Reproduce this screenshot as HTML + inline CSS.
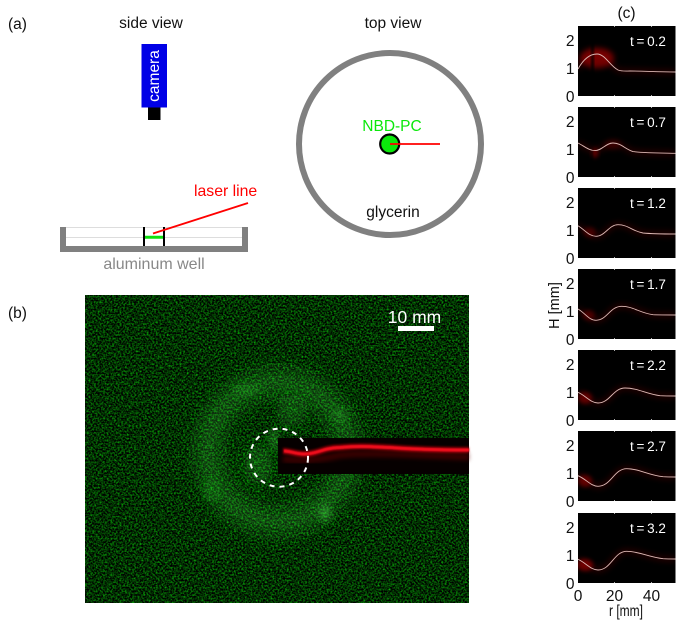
<!DOCTYPE html>
<html>
<head>
<meta charset="utf-8">
<style>
html,body{margin:0;padding:0;background:#fff;width:692px;height:629px;overflow:hidden}
svg{display:block}
text{font-family:"Liberation Sans",sans-serif;font-size:15.5px;fill:#111}
.t{fill:#fff;font-size:13.5px;word-spacing:-1px}
.c{text-anchor:middle}
.e{text-anchor:end}
.curve{fill:none;stroke:#dcb8b4;stroke-width:.9}
.glow{fill:none;stroke:#a00000;stroke-width:6;opacity:.2;filter:url(#b3)}
</style>
</head>
<body>
<svg width="692" height="629" viewBox="0 0 692 629" xmlns="http://www.w3.org/2000/svg">
<defs>
<filter id="noise" x="0" y="0" width="100%" height="100%" color-interpolation-filters="sRGB">
<feTurbulence type="fractalNoise" baseFrequency="0.55" numOctaves="2" seed="7"/>
<feColorMatrix type="matrix" values="0.06 0 0 0 -0.02  1.3 0 0 0 -0.46  0.06 0 0 0 -0.02  0 0 0 0 1"/>
</filter>
<filter id="spark" x="0" y="0" width="100%" height="100%" color-interpolation-filters="sRGB">
<feTurbulence type="fractalNoise" baseFrequency="0.8" numOctaves="1" seed="21"/>
<feColorMatrix type="matrix" values="0 0 0 0 .1  0 0 0 0 .8  0 0 0 0 .1  12 0 0 0 -10"/>
</filter>
<filter id="b2" x="-50%" y="-50%" width="200%" height="200%"><feGaussianBlur stdDeviation="2"/></filter>
<filter id="b3" x="-20%" y="-100%" width="140%" height="300%"><feGaussianBlur stdDeviation="3"/></filter>
<filter id="b7" x="-50%" y="-50%" width="200%" height="200%"><feGaussianBlur stdDeviation="9"/></filter>
<filter id="b4" x="-80%" y="-80%" width="260%" height="260%"><feGaussianBlur stdDeviation="4"/></filter>
<filter id="b1" x="-20%" y="-100%" width="140%" height="300%"><feGaussianBlur stdDeviation="1"/></filter>
<filter id="b05" x="-20%" y="-100%" width="140%" height="300%"><feGaussianBlur stdDeviation=".6"/></filter>
<clipPath id="pc"><rect width="97.5" height="70"/></clipPath>
<clipPath id="gc"><rect x="85" y="295" width="384" height="308"/></clipPath>
</defs>

<text x="8" y="29">(a)</text>
<text x="151" y="28" class="c">side view</text>
<rect x="141.500" y="44" width="25.500" height="63.500" fill="#0000e6"/>
<rect x="148" y="107.500" width="12.500" height="12.500" fill="#000"/>
<text transform="translate(159,76) rotate(-90)" class="c" style="fill:#fff">camera</text>

<path d="M66 227.500H242M66 237.500H242" stroke="#ddd" stroke-width="1"/>
<path d="M60 227V252H248V227H242V246H66V227Z" fill="#808080"/>
<path d="M144 227V246M164 227V246" stroke="#000" stroke-width="2"/>
<path d="M145 237.300H163" stroke="#10e010" stroke-width="3"/>
<path d="M153 233.500L248 203" stroke="#f00" stroke-width="1.900"/>
<text x="194" y="196" style="fill:#f00;font-size:15.800px">laser line</text>
<text x="154" y="269" class="c" style="fill:#888;font-size:16px">aluminum well</text>

<text x="393" y="28" class="c">top view</text>
<circle cx="390" cy="144" r="91" fill="none" stroke="#808080" stroke-width="6"/>
<text x="392" y="131" class="c" style="fill:#0be80b">NBD-PC</text>
<circle cx="389.700" cy="144" r="9.500" fill="#0be80b" stroke="#000" stroke-width="2.200"/>
<path d="M390 144H440" stroke="#f00" stroke-width="1.800"/>
<text x="393" y="217" class="c">glycerin</text>

<text x="8" y="318">(b)</text>
<g clip-path="url(#gc)">
<rect x="85" y="295" width="384" height="308" filter="url(#noise)"/>
<g style="mix-blend-mode:screen">
<circle cx="278" cy="452" r="70" fill="none" stroke="#124a12" stroke-width="26" filter="url(#b7)" opacity=".7"/>
<ellipse cx="325" cy="513" rx="5" ry="8" fill="#2a7a2a" filter="url(#b4)"/>
<ellipse cx="292" cy="410" rx="10" ry="16" fill="#124a12" filter="url(#b7)"/>
<ellipse cx="246" cy="390" rx="14" ry="5" fill="#124e12" filter="url(#b4)"/>
<ellipse cx="340" cy="415" rx="7" ry="7" fill="#124e12" filter="url(#b4)"/>
<ellipse cx="274" cy="440" rx="4" ry="11" fill="#1a601a" filter="url(#b4)"/>
<ellipse cx="258" cy="465" rx="14" ry="20" fill="#0f3c0f" filter="url(#b7)"/>
<ellipse cx="212" cy="490" rx="8" ry="12" fill="#0f420f" filter="url(#b4)"/>
</g>
<rect x="85" y="295" width="384" height="308" filter="url(#spark)"/>
</g>
<rect x="278" y="438" width="191" height="36" fill="#060000"/>
<path d="M283 459C300 461 320 460 340 455C370 452 420 455 469 457" fill="none" stroke="#600000" stroke-width="7" opacity=".55" filter="url(#b2)"/>
<path d="M283 451C290 451 296 454 304 454C318 454 322 448 340 447.500C360 445.500 375 447 390 447.500C410 449 440 450 469 450" fill="none" stroke="#d00008" stroke-width="6" opacity=".7" filter="url(#b1)"/>
<path d="M284 451C290 451 296 454 304 454C318 454 322 448 340 447.500C360 445.500 375 447 390 447.500C410 449 440 450 469 450" fill="none" stroke="#f0101c" stroke-width="3" filter="url(#b05)"/>
<circle cx="279" cy="457.700" r="29" fill="none" stroke="#fff" stroke-width="2" stroke-dasharray="5 5"/>
<rect x="398" y="326" width="36" height="5" fill="#fff"/>
<text x="414.500" y="323" class="c" style="fill:#fff;font-size:17.500px">10 mm</text>

<text x="626.500" y="18" class="c">(c)</text>

<!-- panels -->
<g transform="translate(578,26)">
<rect width="97.500" height="70" fill="#000"/>
<g clip-path="url(#pc)">
<ellipse cx="19" cy="32" rx="17" ry="10" fill="#b00000" filter="url(#b3)" opacity=".65"/>
<rect x="13" y="0" width="3" height="70" fill="#000" filter="url(#b1)" opacity=".85"/>
<path class="glow" d="M0 43C5 34 11 28 19 28C27 28 32 40 40 44C44 45.500 48 45 52 45C65 45 80 46 97.500 46"/>
<path class="curve" d="M0 43C5 34 11 28 19 28C27 28 32 40 40 44C44 45.500 48 45 52 45C65 45 80 46 97.500 46"/>
</g>
<text x="52" y="20" class="t">t = 0.2</text>
</g>
<g transform="translate(578,107)">
<rect width="97.500" height="70" fill="#000"/>
<g clip-path="url(#pc)">
<ellipse cx="17" cy="46" rx="3" ry="5" fill="#a00000" filter="url(#b2)" opacity=".6"/>
<ellipse cx="35" cy="38" rx="8" ry="4" fill="#700000" filter="url(#b3)" opacity=".45"/>
<rect x="13" y="0" width="2" height="70" fill="#000" filter="url(#b1)" opacity=".6"/>
<path class="glow" d="M0 36C6 39 11 43.600 17 43.600C24 43.600 28 36 35 36C43 36 47 42 55 44.600C65 46 80 46 97.500 46.300"/>
<path class="curve" d="M0 36C6 39 11 43.600 17 43.600C24 43.600 28 36 35 36C43 36 47 42 55 44.600C65 46 80 46 97.500 46.300"/>
</g>
<text x="52" y="20" class="t">t = 0.7</text>
</g>
<g transform="translate(578,188)">
<rect width="97.500" height="70" fill="#000"/>
<g clip-path="url(#pc)">
<ellipse cx="12" cy="44" rx="6" ry="5" fill="#800000" filter="url(#b2)" opacity=".45"/>
<path class="glow" d="M0 37.700C7 42 11 48.300 18 48.300C27 48.300 31 36.700 40 36.700C50 36.700 54 43 65 45C75 46 85 46 97.500 46"/>
<path class="curve" d="M0 37.700C7 42 11 48.300 18 48.300C27 48.300 31 36.700 40 36.700C50 36.700 54 43 65 45C75 46 85 46 97.500 46"/>
</g>
<text x="52" y="20" class="t">t = 1.2</text>
</g>
<g transform="translate(578,269)">
<rect width="97.500" height="70" fill="#000"/>
<g clip-path="url(#pc)">
<ellipse cx="11" cy="46" rx="6" ry="5" fill="#900000" filter="url(#b2)" opacity=".45"/>
<path class="glow" d="M0 40C7 44 11 51.300 18 51.300C29 51.300 32 37.300 43.700 37.300C55 37.300 62 44 75 45.700C82 46 90 46 97.500 46"/>
<path class="curve" d="M0 40C7 44 11 51.300 18 51.300C29 51.300 32 37.300 43.700 37.300C55 37.300 62 44 75 45.700C82 46 90 46 97.500 46"/>
</g>
<text x="52" y="20" class="t">t = 1.7</text>
</g>
<g transform="translate(578,350)">
<rect width="97.500" height="70" fill="#000"/>
<g clip-path="url(#pc)">
<ellipse cx="7" cy="48" rx="7" ry="6" fill="#b00000" filter="url(#b2)" opacity=".5"/>
<path class="glow" d="M0 42.300C8 46 13 53 20 53C32 53 35 38 47 38C60 38 68 44 82 45.700C87 46 92 46 97.500 46"/>
<path class="curve" d="M0 42.300C8 46 13 53 20 53C32 53 35 38 47 38C60 38 68 44 82 45.700C87 46 92 46 97.500 46"/>
</g>
<text x="52" y="20" class="t">t = 2.2</text>
</g>
<g transform="translate(578,431)">
<rect width="97.500" height="70" fill="#000"/>
<g clip-path="url(#pc)">
<ellipse cx="7" cy="50" rx="7" ry="6" fill="#b00000" filter="url(#b2)" opacity=".5"/>
<path class="glow" d="M0 44.700C8 48 13 55.300 20 55.300C33 55.300 36 37.700 48.700 37.700C61 37.700 70 44 85 45.700C89 46 93 46 97.500 46"/>
<path class="curve" d="M0 44.700C8 48 13 55.300 20 55.300C33 55.300 36 37.700 48.700 37.700C61 37.700 70 44 85 45.700C89 46 93 46 97.500 46"/>
</g>
<text x="52" y="20" class="t">t = 2.7</text>
</g>
<g transform="translate(578,513)">
<rect width="97.500" height="70" fill="#000"/>
<g clip-path="url(#pc)">
<ellipse cx="7" cy="52" rx="8" ry="6" fill="#c00000" filter="url(#b2)" opacity=".55"/>
<path class="glow" d="M0 46.300C8 50 13 57 20 57C33 57 36 38.300 48.700 38.300C61 38.300 70 44 85 45.700C89 46 93 46 97.500 46"/>
<path class="curve" d="M0 46.300C8 50 13 57 20 57C33 57 36 38.300 48.700 38.300C61 38.300 70 44 85 45.700C89 46 93 46 97.500 46"/>
</g>
<text x="52" y="20" class="t">t = 3.2</text>
</g>

<!-- ticks -->
<path d="M614.500 26v1M651.500 26v1M614.500 95v1M651.500 95v1M614.500 107v1M651.500 107v1M614.500 176v1M651.500 176v1M614.500 188v1M651.500 188v1M614.500 257v1M651.500 257v1M614.500 269v1M651.500 269v1M614.500 338v1M651.500 338v1M614.500 350v1M651.500 350v1M614.500 419v1M651.500 419v1M614.500 431v1M651.500 431v1M614.500 500v1M651.500 500v1M614.500 513v1M651.500 513v1M614.500 582v1M651.500 582v1" stroke="#aaa" stroke-width="1"/>

<!-- y labels -->
<g>
<text x="574.500" y="46" class="e">2</text><text x="574.500" y="74" class="e">1</text><text x="574.500" y="102" class="e">0</text>
<text x="574.500" y="127" class="e">2</text><text x="574.500" y="155" class="e">1</text><text x="574.500" y="183" class="e">0</text>
<text x="574.500" y="208" class="e">2</text><text x="574.500" y="236" class="e">1</text><text x="574.500" y="264" class="e">0</text>
<text x="574.500" y="289" class="e">2</text><text x="574.500" y="317" class="e">1</text><text x="574.500" y="345" class="e">0</text>
<text x="574.500" y="370" class="e">2</text><text x="574.500" y="398" class="e">1</text><text x="574.500" y="426" class="e">0</text>
<text x="574.500" y="451" class="e">2</text><text x="574.500" y="479" class="e">1</text><text x="574.500" y="507" class="e">0</text>
<text x="574.500" y="533" class="e">2</text><text x="574.500" y="561" class="e">1</text><text x="574.500" y="589" class="e">0</text>
</g>
<text x="578" y="601" class="c">0</text>
<text x="614.500" y="601" class="c">20</text>
<text x="651.500" y="601" class="c">40</text>
<text x="609" y="616" textLength="34" lengthAdjust="spacingAndGlyphs" style="font-size:15.500px">r [mm]</text>
<text transform="translate(559,305.500) rotate(-90)" class="c" style="font-size:14.500px">H [mm]</text>
</svg>
</body>
</html>
